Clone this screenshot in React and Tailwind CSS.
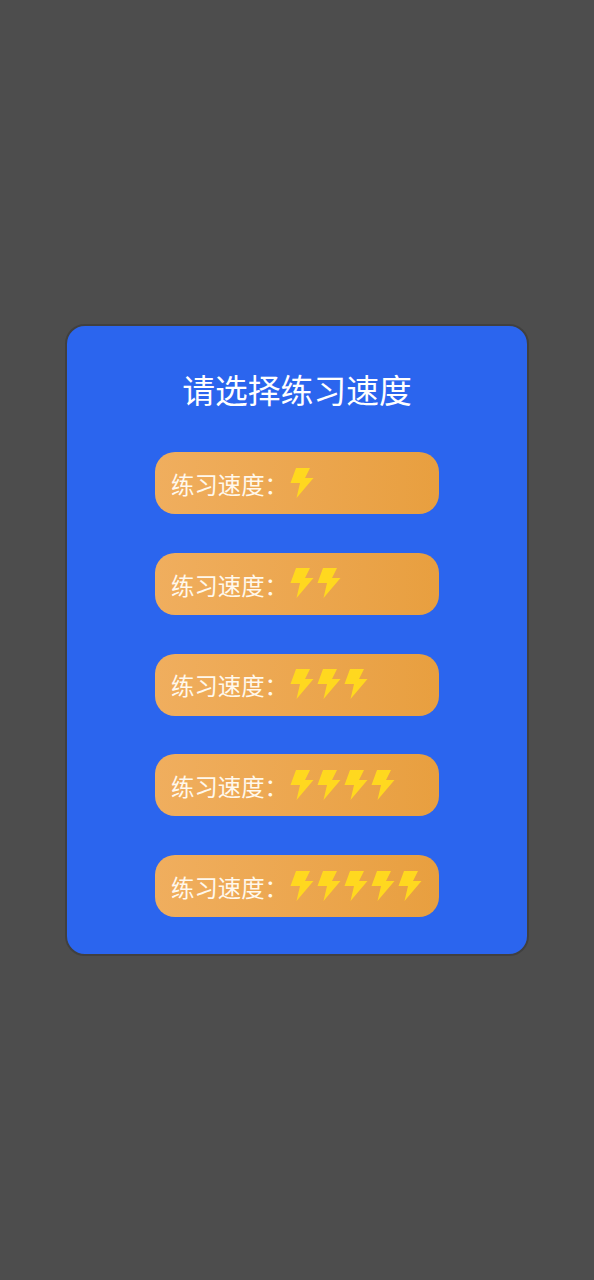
import React from "react";

const speeds = [1, 2, 3, 4, 5];

const Bolt = () => (
  <svg width="24" height="30" viewBox="0 0 24 30" className="shrink-0">
    <polygon points="6,0 20,0 15,10 23.5,10 6.5,30 10,15 0.5,15" fill="#ffd81f" />
  </svg>
);

const SpeedOption = ({ level }) => (
  <button className="flex items-center w-[284px] h-[62px] pl-4 rounded-[20px] bg-gradient-to-r from-[#f0ae5e] to-[#e89f3f] text-[#fff8ec] text-[23.4px]">
    <span className="w-[119px] text-left whitespace-nowrap mt-[7px]">练习速度：</span>
    <span className="flex gap-[3px] -mt-[1px]">
      {Array.from({ length: level }).map((_, i) => (
        <Bolt key={i} />
      ))}
    </span>
  </button>
);

const App = () => {
  return (
    <div
      className="min-h-screen bg-[#4d4d4d] flex items-center justify-center"
      style={{ fontFamily: '"Liberation Sans", "Noto Sans CJK SC", sans-serif' }}
    >
      <div className="w-[464px] h-[632px] bg-[#2b65ee] border-2 border-[#404040] rounded-[20px] flex flex-col items-center pt-[43px]">
        <h1 className="text-[32.8px] leading-[46px] text-white font-normal">请选择练习速度</h1>
        <div className="flex flex-col gap-[38.75px] mt-[37px]">
          {speeds.map((level) => (
            <SpeedOption key={level} level={level} />
          ))}
        </div>
      </div>
    </div>
  );
};

export default App;
